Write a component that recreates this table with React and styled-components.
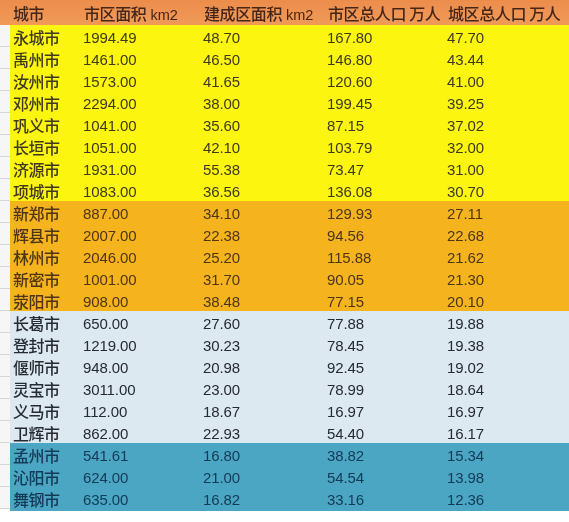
import React from "react";
import styled, { createGlobalStyle } from "styled-components";

const GlobalStyle = createGlobalStyle`
  html, body {
    margin: 0;
    padding: 0;
    background: #ffffff;
  }
  body {
    font-family: "Liberation Sans", "Noto Sans CJK SC", sans-serif;
  }
`;

const bands = {
  head: { bg: "linear-gradient(180deg, #ec8d4c 0%, #f19a58 100%)", color: "#45271a" },
  yellow: { bg: "#fcf510", color: "#3f3a1e" },
  amber: { bg: "#f5b41e", color: "#4e3516" },
  pale: { bg: "#dde9f1", color: "#262a32" },
  teal: { bg: "#4aa6c3", color: "#133a56" },
};

const groups = [
  {
    band: "yellow",
    rows: [
      ["永城市", "1994.49", "48.70", "167.80", "47.70"],
      ["禹州市", "1461.00", "46.50", "146.80", "43.44"],
      ["汝州市", "1573.00", "41.65", "120.60", "41.00"],
      ["邓州市", "2294.00", "38.00", "199.45", "39.25"],
      ["巩义市", "1041.00", "35.60", "87.15", "37.02"],
      ["长垣市", "1051.00", "42.10", "103.79", "32.00"],
      ["济源市", "1931.00", "55.38", "73.47", "31.00"],
      ["项城市", "1083.00", "36.56", "136.08", "30.70"],
    ],
  },
  {
    band: "amber",
    rows: [
      ["新郑市", "887.00", "34.10", "129.93", "27.11"],
      ["辉县市", "2007.00", "22.38", "94.56", "22.68"],
      ["林州市", "2046.00", "25.20", "115.88", "21.62"],
      ["新密市", "1001.00", "31.70", "90.05", "21.30"],
      ["荥阳市", "908.00", "38.48", "77.15", "20.10"],
    ],
  },
  {
    band: "pale",
    rows: [
      ["长葛市", "650.00", "27.60", "77.88", "19.88"],
      ["登封市", "1219.00", "30.23", "78.45", "19.38"],
      ["偃师市", "948.00", "20.98", "92.45", "19.02"],
      ["灵宝市", "3011.00", "23.00", "78.99", "18.64"],
      ["义马市", "112.00", "18.67", "16.97", "16.97"],
      ["卫辉市", "862.00", "22.93", "54.40", "16.17"],
    ],
  },
  {
    band: "teal",
    rows: [
      ["孟州市", "541.61", "16.80", "38.82", "15.34"],
      ["沁阳市", "624.00", "21.00", "54.54", "13.98"],
      ["舞钢市", "635.00", "16.82", "33.16", "12.36"],
    ],
  },
];

const Sheet = styled.div`
  width: 569px;
  height: 522px;
  overflow: hidden;
  background: #ffffff;
  filter: blur(0.25px);
`;

const HeaderRow = styled.div`
  display: grid;
  grid-template-columns: 10px 71px 120px 124px 120px 1fr;
  align-items: center;
  height: 25px;
  background: ${bands.head.bg};
  color: ${bands.head.color};
  padding-left: 3px;
  box-sizing: border-box;
`;

const Band = styled.div`
  background: ${(p) => bands[p.$band].bg};
  color: ${(p) => bands[p.$band].color};
  margin-left: 10px;
  padding-bottom: ${(p) => (p.$last ? "2px" : "0")};
`;

const Row = styled.div`
  display: grid;
  grid-template-columns: 70px 120px 124px 120px 1fr;
  align-items: center;
  height: 22px;
  position: relative;

  &::before {
    content: "";
    position: absolute;
    left: -10px;
    width: 10px;
    top: 0;
    bottom: 0;
    background: #f6f6f6;
    border-bottom: 1px solid #d6d6d6;
    box-sizing: border-box;
  }
`;

const Cell = styled.div`
  padding-left: 3px;
  white-space: nowrap;
  font-family: ${(p) => (p.$cjk ? '"Noto Sans CJK SC", sans-serif' : '"Liberation Sans", sans-serif')};
  font-size: ${(p) => (p.$cjk ? "16px" : "15px")};
  font-weight: ${(p) => (p.$cjk ? 500 : 400)};
  letter-spacing: ${(p) => (p.$cjk ? "-0.5px" : "-0.1px")};
`;

const HeadCell = styled.div`
  white-space: nowrap;
  font-family: "Noto Sans CJK SC", sans-serif;
  font-size: 16px;
  font-weight: 500;
  letter-spacing: -0.4px;
`;

const Unit = styled.span`
  font-family: "Liberation Sans", sans-serif;
  font-size: 14.5px;
  font-weight: 400;
  letter-spacing: 0;
  margin-left: 4px;
`;

export default function App() {
  return (
    <>
      <GlobalStyle />
      <Sheet>
        <HeaderRow>
          <span />
          <HeadCell>城市</HeadCell>
          <HeadCell>
            市区面积<Unit>km2</Unit>
          </HeadCell>
          <HeadCell>
            建成区面积<Unit>km2</Unit>
          </HeadCell>
          <HeadCell>市区总人口 万人</HeadCell>
          <HeadCell>城区总人口 万人</HeadCell>
        </HeaderRow>
        {groups.map((g, gi) => (
          <Band key={g.band} $band={g.band} $last={gi === groups.length - 1}>
            {g.rows.map((r) => (
              <Row key={r[0]}>
                {r.map((v, i) => (
                  <Cell key={i} $cjk={i === 0}>
                    {v}
                  </Cell>
                ))}
              </Row>
            ))}
          </Band>
        ))}
      </Sheet>
    </>
  );
}
